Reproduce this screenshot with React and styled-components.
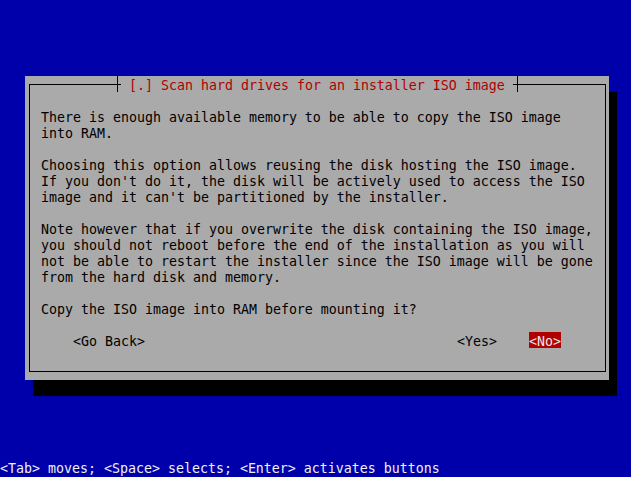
import React from "react";
import styled, { createGlobalStyle } from "styled-components";

const GlobalStyle = createGlobalStyle`
    html, body {
        margin: 0;
        padding: 0;
        background: #0000aa;
    }
    body {
        font-family: "DejaVu Sans Mono", "Liberation Mono", monospace;
        font-size: 13.29px;
        line-height: 16px;
    }
`;

const paragraphs = [
    [
        "There is enough available memory to be able to copy the ISO image",
        "into RAM.",
    ],
    [
        "Choosing this option allows reusing the disk hosting the ISO image.",
        "If you don't do it, the disk will be actively used to access the ISO",
        "image and it can't be partitioned by the installer.",
    ],
    [
        "Note however that if you overwrite the disk containing the ISO image,",
        "you should not reboot before the end of the installation as you will",
        "not be able to restart the installer since the ISO image will be gone",
        "from the hard disk and memory.",
    ],
    ["Copy the ISO image into RAM before mounting it?"],
];

const App = () => {
    return (
        <Screen>
            <GlobalStyle />
            <Dialog>
                <Frame>
                    <TitleBar>
                        <Tick />
                        <Title> [.] Scan hard drives for an installer ISO image </Title>
                        <Tick />
                    </TitleBar>
                    <Body>
                        {paragraphs.map((lines, i) => (
                            <Para key={i}>
                                {lines.map((line, j) => (
                                    <Line key={j}>{line}</Line>
                                ))}
                            </Para>
                        ))}
                    </Body>
                    <Buttons>
                        <Button>&lt;Go Back&gt;</Button>
                        <Spacer />
                        <Button>&lt;Yes&gt;</Button>
                        <Button active>&lt;No&gt;</Button>
                    </Buttons>
                </Frame>
            </Dialog>
            <HelpLine>
                &lt;Tab&gt; moves; &lt;Space&gt; selects; &lt;Enter&gt; activates buttons
            </HelpLine>
        </Screen>
    );
};

export default App;

const Screen = styled.div`
    width: 631px;
    height: 477px;
    background: #0000aa;
    display: flex;
    flex-direction: column;
    overflow: hidden;
`;

const Dialog = styled.div`
    margin: 76px 0 0 25px;
    width: 584px;
    height: 304px;
    box-sizing: border-box;
    padding: 8px 3px 8px 4px;
    background: #aaaaaa;
    box-shadow: 8px 16px 0 #000;
`;

const Frame = styled.div`
    height: 100%;
    box-sizing: border-box;
    border: 1px solid #000;
    display: flex;
    flex-direction: column;
`;

const TitleBar = styled.div`
    display: flex;
    height: 16px;
    margin: -9px 0 0 83px;
`;

const Tick = styled.div`
    width: 8px;
    height: 16px;
    background: linear-gradient(#000, #000) center / 1px 100% no-repeat;
`;

const Title = styled.div`
    background: #aaaaaa;
    color: #b00000;
    white-space: pre;
    width: 392px;
    height: 16px;
    line-height: 19px;
`;

const Body = styled.div`
    margin-top: 16px;
    padding-left: 11px;
    color: #000;
`;

const Para = styled.div`
    margin-bottom: 16px;
`;

const Line = styled.div`
    white-space: pre;
    height: 16px;
    line-height: 19px;
`;

const Buttons = styled.div`
    display: flex;
    gap: 32px;
    padding: 0 44px 0 43px;
    height: 16px;
`;

const Spacer = styled.div`
    flex: 1;
`;

const Button = styled.div`
    white-space: pre;
    height: 16px;
    line-height: 19px;
    color: ${(props) => (props.active ? "#e8e8e8" : "#000")};
    background: ${(props) => (props.active ? "#b00000" : "transparent")};
`;

const HelpLine = styled.div`
    margin-top: auto;
    height: 16px;
    color: #f0f0f0;
    white-space: pre;
`;
